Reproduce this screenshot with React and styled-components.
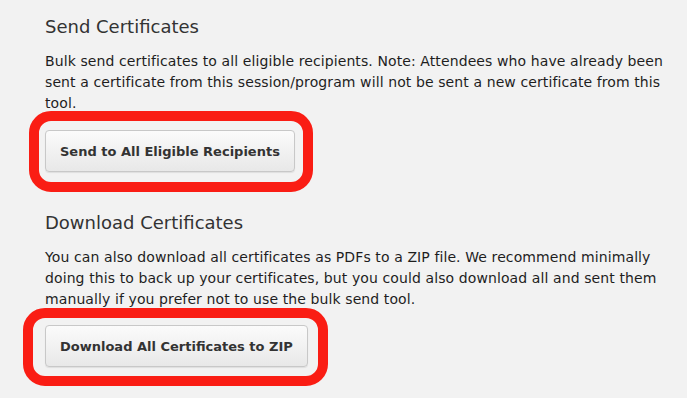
import React from "react";
import styled, { createGlobalStyle } from "styled-components";

const Global = createGlobalStyle`
  html, body { margin: 0; padding: 0; background: #f2f2f2; }
  body { font-family: "DejaVu Sans", "Liberation Sans", sans-serif; }
`;

const Page = styled.div`
  padding: 15px 0 30px 45px;
  width: 625px;
`;

const Section = styled.section`
  display: flex;
  flex-direction: column;
  align-items: flex-start;
  margin-bottom: ${(p) => p.$gapAfter || 0}px;
`;

const Heading = styled.h2`
  margin: 0 0 12px;
  font-size: 18px;
  line-height: 24px;
  font-weight: normal;
  color: #333;
`;

const Text = styled.p`
  margin: 0 0 ${(p) => p.$after}px;
  font-size: 14px;
  letter-spacing: 0.1px;
  line-height: 21px;
  color: #1e1e1e;
`;

const ButtonWrap = styled.div`
  position: relative;
`;

const Button = styled.button`
  display: block;
  height: 42px;
  padding: 0 14px;
  font-family: inherit;
  font-size: 13px;
  font-weight: bold;
  color: #333;
  background: linear-gradient(#fbfbfb, #e8e8e8);
  border: 1px solid #c8c8c8;
  border-radius: 4px;
  box-shadow: 0 1px 1px rgba(0, 0, 0, 0.08);
  cursor: pointer;
`;

const Highlight = styled.div`
  position: absolute;
  left: ${(p) => p.$l}px;
  right: ${(p) => p.$r}px;
  top: ${(p) => p.$t}px;
  bottom: ${(p) => p.$b}px;
  border: 10px solid #fa1d14;
  border-radius: 22px;
  pointer-events: none;
`;

export default function App() {
  return (
    <>
      <Global />
      <Page>
        <Section $gapAfter={39}>
          <Heading>Send Certificates</Heading>
          <Text $after={16}>
            Bulk send certificates to all eligible recipients. Note: Attendees who have already been
            sent a certificate from this session/program will not be sent a new certificate from this
            tool.
          </Text>
          <ButtonWrap>
            <Button>Send to All Eligible Recipients</Button>
            <Highlight $l={-16} $r={-18} $t={-19} $b={-20} />
          </ButtonWrap>
        </Section>
        <Section>
          <Heading>Download Certificates</Heading>
          <Text $after={15}>
            You can also download all certificates as PDFs to a ZIP file. We recommend minimally
            doing this to back up your certificates, but you could also download all and sent them
            manually if you prefer not to use the bulk send tool.
          </Text>
          <ButtonWrap>
            <Button>Download All Certificates to ZIP</Button>
            <Highlight $l={-22} $r={-20} $t={-17} $b={-19} />
          </ButtonWrap>
        </Section>
      </Page>
    </>
  );
}
